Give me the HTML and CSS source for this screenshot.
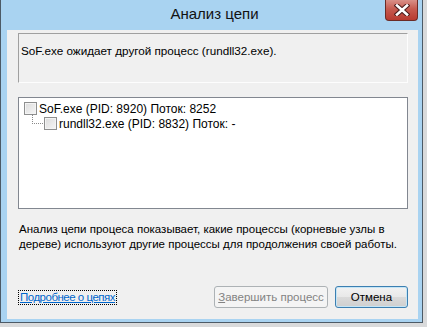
FILE: index.html
```html
<!DOCTYPE html>
<html lang="ru">
<head>
    <meta charset="UTF-8">
    <title>Анализ цепи</title>
    <link rel="stylesheet" href="styles.css">
</head>
<body>

    <!-- Dialog window -->
    <div class="window">

        <!-- Title bar -->
        <div class="titlebar">
            <span class="title">Анализ цепи</span>
            <div class="close-btn">
                <svg width="16" height="12" viewBox="0 0 16 12">
                    <path d="M3 1.5 L13 10.5 M13 1.5 L3 10.5" stroke="#4a1a1a" stroke-width="4.6" stroke-linecap="square"/>
                    <path d="M3 1.5 L13 10.5 M13 1.5 L3 10.5" stroke="#ffffff" stroke-width="2.6" stroke-linecap="square"/>
                </svg>
            </div>
        </div>

        <!-- Client area -->
        <div class="client">
            <div class="message">SoF.exe ожидает другой процесс (rundll32.exe).</div>

            <div class="tree">
                <div class="node">
                    <span class="check"></span>
                    <span>SoF.exe (PID: 8920) Поток: 8252</span>
                </div>
                <div class="node child">
                    <span class="branch"></span>
                    <span class="check"></span>
                    <span>rundll32.exe (PID: 8832) Поток: -</span>
                </div>
            </div>

            <p class="info">Анализ цепи процеса показывает, какие процессы (корневые узлы в<br>дереве) используют другие процессы для продолжения своей работы.</p>

            <div class="footer">
                <a href="#" class="link">Подробнее о цепях</a>
                <div class="buttons">
                    <button class="btn" disabled><u>З</u>авершить процесс</button>
                    <button class="btn default">Отмена</button>
                </div>
            </div>
        </div>
    </div>

</body>
</html>
```

FILE: styles.css
```css
/* Global Styles */
* {
    margin: 0;
    padding: 0;
    box-sizing: border-box;
}

body {
    background: #d9dadb;
    font-family: 'Liberation Sans', Arial, sans-serif;
    font-size: 11.5px;
    color: #000;
    width: 427px;
    height: 327px;
    overflow: hidden;
}

/* Window frame */
.window {
    width: 423px;
    height: 323px;
    background: #a9d3f1;
    border: 1px solid #4c5a66;
    border-top: none;
    display: flex;
    flex-direction: column;
    padding: 0 4px 3px 6px;
}

/* Title bar */
.titlebar {
    height: 30px;
    position: relative;
    display: flex;
    align-items: center;
    justify-content: center;
    padding-bottom: 3px;
}

.title {
    font-size: 15px;
    color: #111;
    margin-left: 4px;
}

.close-btn {
    position: absolute;
    top: 0;
    right: 0;
    width: 33px;
    height: 21px;
    background: linear-gradient(#d99088, #c65a4f 45%, #b83a30);
    border: 1px solid #6b2b26;
    border-top: none;
    border-radius: 0 0 4px 4px;
    display: flex;
    align-items: center;
    justify-content: center;
}

/* Client area */
.client {
    flex: 1;
    background: #f0f0f0;
    padding: 3px 10px 11px 11px;
    display: flex;
    flex-direction: column;
}

.message {
    height: 50px;
    border: 1px solid;
    border-color: #a0a0a0 #fdfdfd #fdfdfd #a0a0a0;
    padding: 10px 2px;
    font-size: 11.7px;
}

/* Process tree */
.tree {
    height: 112px;
    margin-top: 14px;
    background: #fff;
    border: 1px solid #828790;
    padding: 3px 5px;
    font-size: 12px;
}

.node {
    display: flex;
    align-items: center;
    height: 15px;
    position: relative;
}

.node.child {
    padding-left: 20px;
}

.branch {
    position: absolute;
    left: 8px;
    top: -2px;
    width: 11px;
    height: 10px;
    border-left: 1px dotted #8a8a8a;
    border-bottom: 1px dotted #8a8a8a;
}

.check {
    width: 13px;
    height: 13px;
    border: 1px solid #8e8f8f;
    background: linear-gradient(135deg, #dcdcdc, #f6f6f6);
    box-shadow: inset 0 0 0 1px #f4f4f4;
    margin-right: 2px;
    flex-shrink: 0;
}

.info {
    margin-top: 13px;
    line-height: 15px;
    padding-left: 1px;
    white-space: nowrap;
}

/* Footer */
.footer {
    margin-top: auto;
    display: flex;
    align-items: center;
    justify-content: space-between;
}

.link {
    color: #0066cc;
    text-decoration: underline;
    outline: 1px dotted #000;
    padding: 0 1px;
    line-height: 13px;
    margin-left: 1px;
    letter-spacing: -0.5px;
}

.buttons {
    display: flex;
    gap: 7px;
}

.btn {
    font-family: 'Liberation Sans', Arial, sans-serif;
    font-size: 11.5px;
    height: 22px;
    padding: 0;
    border: 1px solid #acacac;
    border-radius: 3px;
    color: #000;
    white-space: nowrap;
}

.btn:disabled {
    width: 114px;
    background: #f4f4f4;
    border-color: #adb2b5;
    color: #838383;
}

.btn.default {
    width: 73px;
    border-color: #3c7fb1;
    box-shadow: inset 0 0 0 1px #c4e5f6;
    background: linear-gradient(#f2f2f2, #e8e8e8 50%, #dadada 51%, #cfcfcf);
}
```
